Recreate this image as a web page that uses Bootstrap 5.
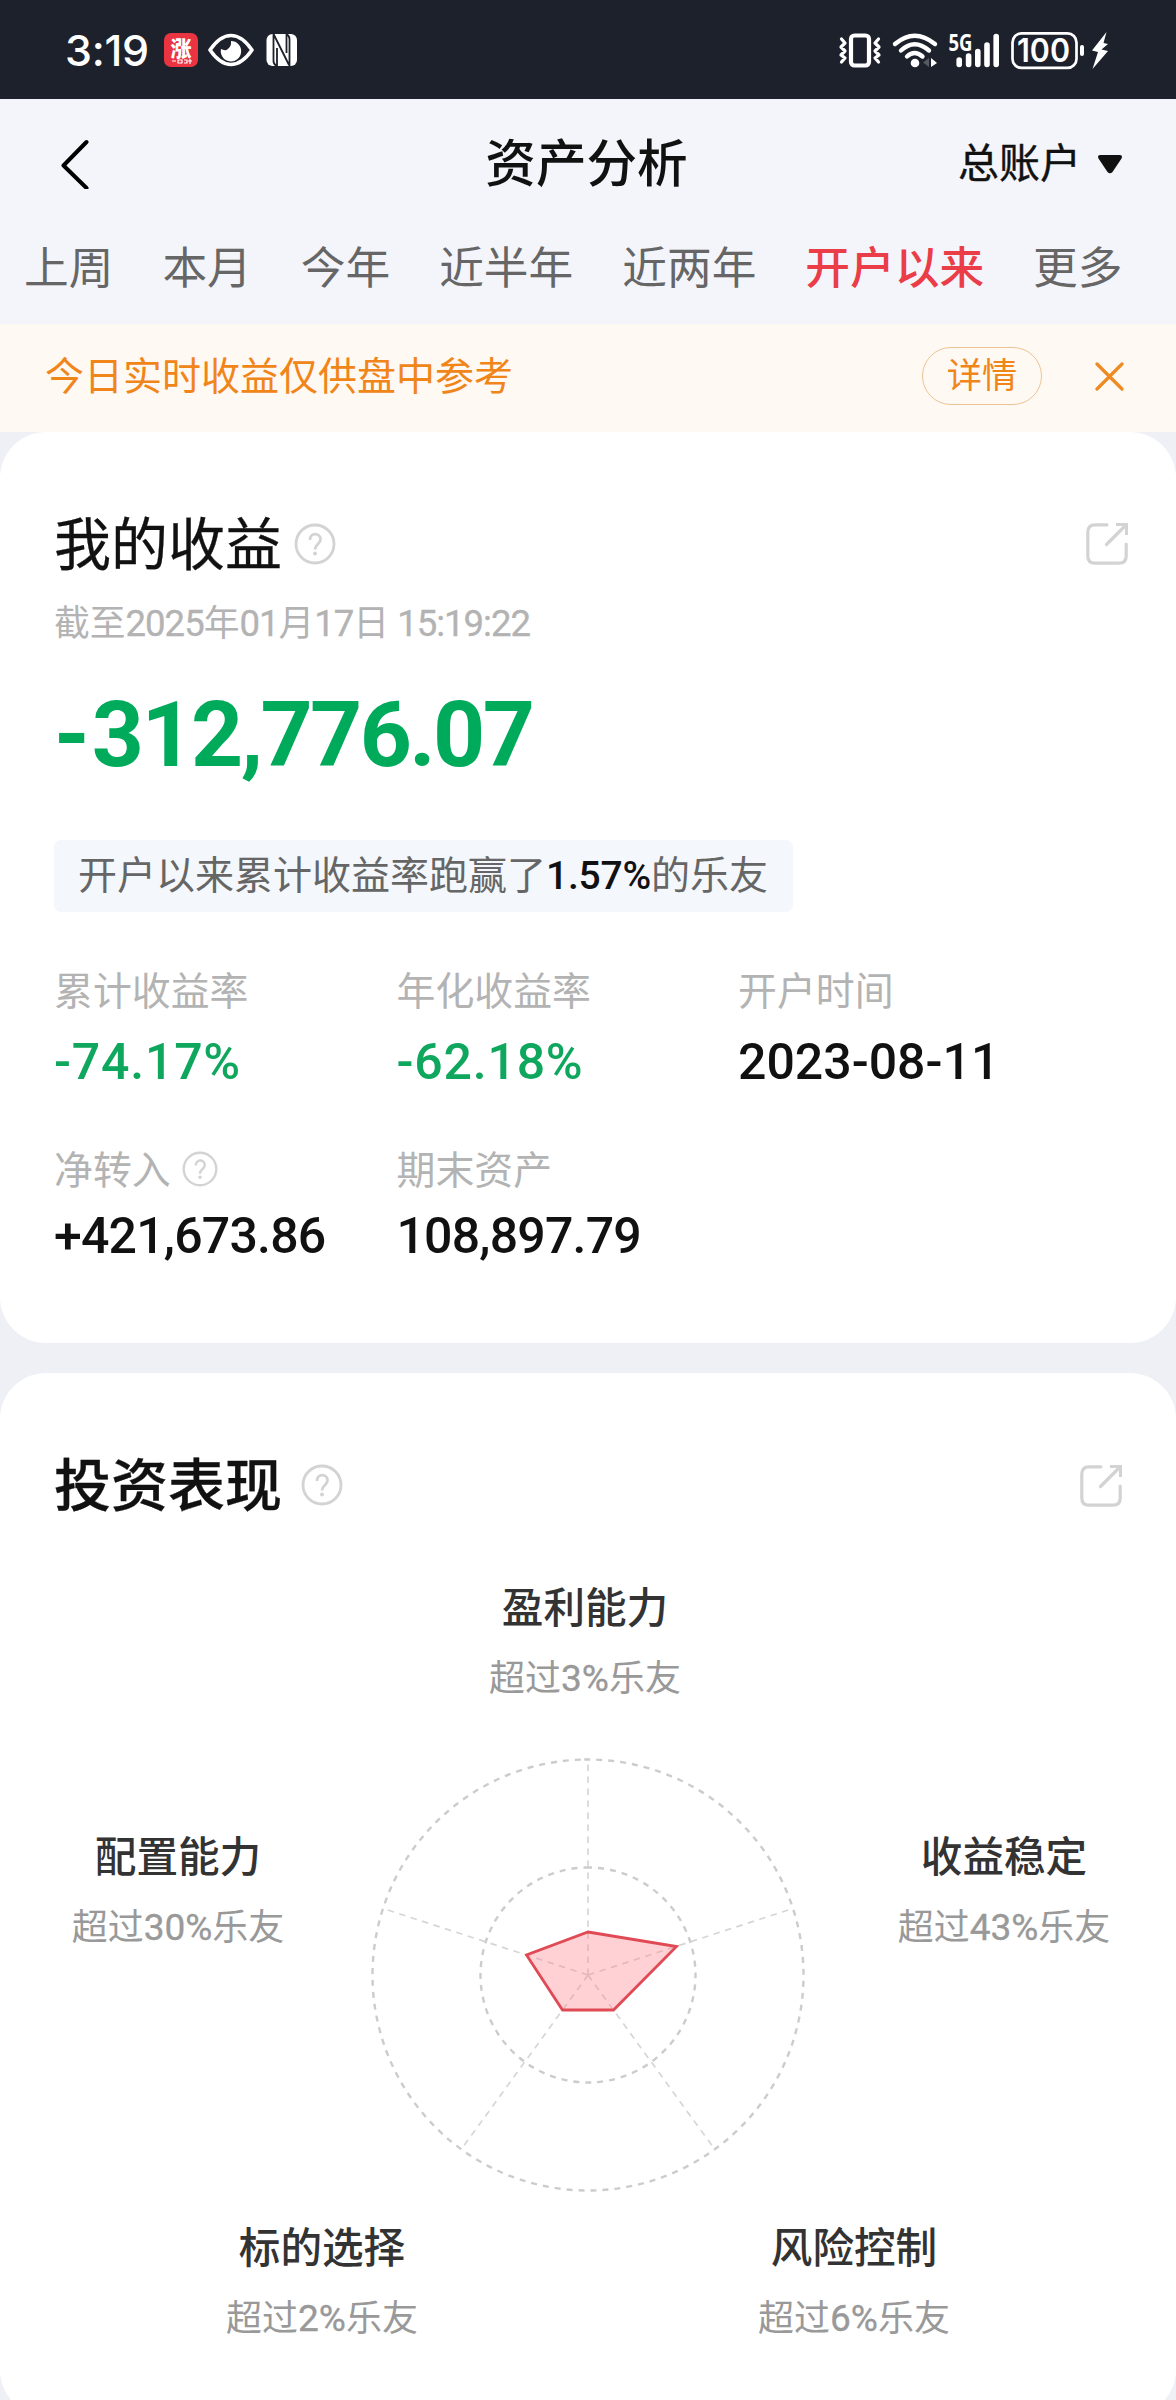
<!DOCTYPE html>
<html lang="zh-CN">
<head>
<meta charset="utf-8">
<meta name="viewport" content="width=device-width, initial-scale=1">
<title>资产分析</title>
<link href="https://cdn.jsdelivr.net/npm/bootstrap@5.3.0/dist/css/bootstrap.min.css" rel="stylesheet">
<style>
  body{font-family:"Noto Sans CJK SC",sans-serif;background:#eff0f5;color:#111;width:1176px;height:2400px;overflow:hidden}
  svg{display:block;flex:none}
  .num{font-family:Roboto,"Noto Sans CJK SC",sans-serif;font-weight:500}
  .statusbar{height:99px;background:#1d212c;padding:0 68px 0 65px}
  .clock{font:500 43px/66px Inter,sans-serif;letter-spacing:-.3px;width:99px}
  .eye{margin:0 12px 0 10px}
  .topzone{height:225px;background:#f4f5fa}
  .titlebar{height:126px;padding:0 53px 0 60px}
  .page-title{font-size:50.6px;line-height:70px;font-weight:500;margin:0 0 5px -35px}
  .acct{font-size:41px;line-height:60px;margin-bottom:4px;-webkit-text-stroke:.4px #111}
  .acct svg{margin:8px 0 0 16px}
  .period{gap:49px;padding-left:24px;font-size:44.7px;line-height:64px;color:#666;margin-top:8px}
  .period .on{color:#eb3d48;font-weight:500}
  .notice{height:108px;background:#fff9f4;color:#f08519;padding:0 52px 4px 45px;font-size:39px}
  .notice-text{margin-bottom:5px}
  .detail{width:120px;height:58px;border:1.5px solid #ecc394;border-radius:29px;font-size:35.2px;line-height:50px;margin-right:53px}
  .panel{background:#fff;border-radius:46px;padding:68px 48px 0 54px}
  .panel-a{height:911px}
  .panel-b{height:1043px;margin-top:30px;padding-right:54px}
  .panel-title{font-size:57px;line-height:80px;font-weight:400;-webkit-text-stroke:.3px #111}
  .help-a{margin-left:12px}
  .help-b{margin-left:19px}
  .help-c{margin:3px 0 0 11px}
  .share-b{margin-top:10px}
  .stamp{font-size:35.8px;line-height:50px;color:#b3b3b3;margin-top:15px;white-space:pre}
  .stamp .num,.axis-s .num{font-weight:400;-webkit-text-stroke:.35px currentColor}
  .stamp .num{font-size:36.5px;letter-spacing:-1px}
  .total{font-size:91px;line-height:100px;font-weight:700;color:#00aa5b;letter-spacing:-2.6px;margin-top:36px}
  .total .sign{letter-spacing:2px}
  .rankpill{margin-top:55px;height:72px;background:#f4f7fb;border-radius:7px;padding:0 24px;font-size:39px;line-height:64px;color:#666;width:739px}
  .rankpill .num{font-size:39px;color:#111;line-height:64px;letter-spacing:-.2px}
  .stats{display:grid;grid-template-columns:341.5px 341.5px 1fr}
  .stats-rates{margin-top:51px}
  .stats-funds{margin-top:50px}
  .stat-k{font-size:38.9px;line-height:50px;color:#b3b3b3}
  .stat-v{font-size:50px;line-height:60px;margin-top:19px}
  .stats>div+div{padding-left:1px}
  .stats-funds .stat-v{margin-top:14px;letter-spacing:-.8px}
  .down{color:#0fa65e;letter-spacing:.8px}
  .axis-t{font-size:41.6px;line-height:60px;font-weight:500;color:#333}
  .axis-s{font-size:36px;line-height:50px;color:#999;margin-top:15px}
  .axis-s .num{font-size:37px;line-height:50px}
  .radar{padding-top:54px}
  .axis-top{width:1062px}
  .axis-mid{margin-top:51px;height:440px;padding-left:4px}
  .axis-mid svg{margin-right:6px}
  .axis-side{width:240px}
  .axis-mid .axis-side{padding-top:69px}
  .axis-mid .axis-side:last-child{margin-right:-2px}
  .axis-low{margin-top:20px;padding-left:148px;gap:292px}
</style>
</head>
<body>
<svg width="0" height="0" class="position-absolute" aria-hidden="true">
  <symbol id="help" viewBox="0 0 42 42"><circle cx="21" cy="21" r="19" fill="none" stroke="#d3d3d3" stroke-width="2.8"/><path d="M16 17c0-8 10.500-7.500 10.500-.500 0 4.500-5.500 4.500-5.500 10" fill="none" stroke="#d3d3d3" stroke-width="2.800"/><circle cx="21" cy="30.500" r="2" fill="#d3d3d3"/></symbol>
  <symbol id="share" viewBox="0 0 42 42"><path d="M21 1.800H9Q1.800 1.800 1.800 9V33Q1.800 40.200 9 40.200H33Q40.200 40.200 40.200 33V21M20.500 21.500 39 3" fill="none" stroke="#d3d3d3" stroke-width="3.200" stroke-linecap="round"/><path d="M30 0H42V12H39V3H30Z" fill="#d3d3d3"/></symbol>
</svg>

<header class="statusbar d-flex align-items-center text-white">
  <span class="clock">3:19</span>
  <svg width="34" height="34" viewBox="0 0 34 34"><rect width="34" height="34" rx="7" fill="#ea3442"/><text x="17" y="23" text-anchor="middle" font-size="21" font-weight="900" font-family="Noto Sans CJK SC" fill="#fff">涨</text><path d="M8 28H12M14 27H18V30H14ZM20 27H23V30H20M26 26V31M24 28H28" stroke="#fff" stroke-width="1.200" fill="none"/></svg>
  <svg class="eye" width="46" height="34" viewBox="0 0 46 34"><path d="M2 17Q12 2.500 23 2.500T44 17Q34 31.500 23 31.500T2 17Z" fill="none" stroke="#fff" stroke-width="3.600" stroke-linejoin="round"/><path d="M23 8A9 9 0 0 1 18.500 17Q15.500 17.500 13 16A10.200 10.200 0 1 0 23 8Z" fill="#fff"/></svg>
  <svg width="32" height="34" viewBox="0 0 32 34"><rect x=".5" y="1" width="30.500" height="32" rx="6" fill="#fff"/><path d="M7.500 1V28Q7.500 31 10.500 33M7.500 1 23 32M23.500 33V6Q23.500 3 20.500 1M11 15V33M20.500 1V20" fill="none" stroke="#1d212c" stroke-width="1.800"/></svg>

  <svg class="ms-auto" width="270" height="60" viewBox="838 19 270 60">
    <rect x="851" y="34.500" width="18" height="30" rx="3.500" fill="none" stroke="#fff" stroke-width="4.200"/>
    <path d="M841.500 38 845 42 841 46 845 50 841 54 845 57 841.500 61M878.500 38 875 42 879 46 875 50 879 54 875 57 878.500 61" fill="none" stroke="#fff" stroke-width="3.200" stroke-linejoin="round" stroke-linecap="round"/>
    <g fill="none" stroke="#fff" stroke-width="4.400" stroke-linecap="round"><path d="M895 43Q914.500 26.500 935 43"/><path d="M901 49.500Q914.500 37 929 49.500"/><path d="M907 55.500Q914.500 48.500 922.500 55.500"/></g>
    <circle cx="915" cy="62" r="4.300" fill="#fff"/><path d="M929 57V66L923 61.500Z" fill="#555962"/><path d="M931 57 937 62 931 66Z" fill="#fff"/>
    <text x="948.500" y="49.500" font-family="Open Sans" font-size="22.500" font-weight="700" textLength="24" lengthAdjust="spacingAndGlyphs" fill="#fff">5G</text>
    <g stroke="#fff" stroke-width="5.600" stroke-linecap="round"><path d="M959.200 59V63.500M968.600 55V63.500M977.800 50.500V63.500M987 44V63.500M996.200 35.500V63.500"/></g>
    <rect x="1012.500" y="32.400" width="64" height="34.500" rx="9" fill="none" stroke="#fff" stroke-width="2.700"/>
    <text x="1043.500" y="61" text-anchor="middle" font-family="Inter" font-size="32" font-weight="600" textLength="53" lengthAdjust="spacingAndGlyphs" fill="#fff">100</text>
    <rect x="1080" y="44" width="4" height="11" rx="2" fill="#fff"/>
    <path d="M1106.500 31 1092 49.500 1098 51 1092.500 68 1108 50 1101.500 48.500 1108 43 1103.500 42Z" fill="#fff"/>
  </svg>
</header>

<div class="topzone">
  <nav class="titlebar d-flex align-items-center justify-content-between">
    <svg width="190" height="50" viewBox="0 0 190 50" class="mt-1"><path d="M26.500 3 3.500 26.500 26.500 49" fill="none" stroke="#000" stroke-width="4" stroke-linecap="round" stroke-linejoin="round"/></svg>
    <h1 class="page-title">资产分析</h1>
    <div class="acct d-flex align-items-center">总账户<svg width="26" height="20" viewBox="0 0 26 20"><path d="M3 1H23Q26 1.500 24.500 4.500L15.500 18Q13 20.500 10.500 18L1.500 4.500Q0 1.500 3 1Z" fill="#111"/></svg></div>
  </nav>
  <div class="period d-flex text-nowrap">
    <span>上周</span><span>本月</span><span>今年</span><span>近半年</span><span>近两年</span><span class="on">开户以来</span><span>更多</span>
  </div>
</div>

<div class="notice d-flex align-items-center">
  <span class="notice-text me-auto">今日实时收益仅供盘中参考</span>
  <span class="detail text-center">详情</span>
  <svg width="29" height="29" viewBox="0 0 29 29"><path d="M2 2 27 27M27 2 2 27" stroke="#ee8a22" stroke-width="3.200" stroke-linecap="round"/></svg>
</div>

<main>
  <section class="panel panel-a">
    <div class="d-flex align-items-center">
      <h2 class="panel-title mb-0">我的收益</h2>
      <svg class="help-a mt-2" width="42" height="42"><use href="#help"/></svg>
      <svg class="mt-2 ms-auto" width="42" height="42"><use href="#share"/></svg>
    </div>
    <div class="stamp">截至<span class="num">2025</span>年<span class="num">01</span>月<span class="num">17</span>日<span class="num"> 15:19:22</span></div>
    <div class="total num"><span class="sign">-</span>312,776.07</div>
    <div class="rankpill text-nowrap">开户以来累计收益率跑赢了<span class="num">1.57%</span>的乐友</div>
    <div class="stats stats-rates">
      <div><div class="stat-k">累计收益率</div><div class="stat-v num down">-74.17%</div></div>
      <div><div class="stat-k">年化收益率</div><div class="stat-v num down">-62.18%</div></div>
      <div><div class="stat-k">开户时间</div><div class="stat-v num">2023-08-11</div></div>
    </div>
    <div class="stats stats-funds">
      <div><div class="stat-k d-flex align-items-center">净转入<svg class="help-c" width="36" height="36"><use href="#help"/></svg></div><div class="stat-v num">+421,673.86</div></div>
      <div><div class="stat-k">期末资产</div><div class="stat-v num">108,897.79</div></div>
    </div>
  </section>

  <section class="panel panel-b">
    <div class="d-flex align-items-center">
      <h2 class="panel-title fw-medium mb-0">投资表现</h2>
      <svg class="help-b mt-2" width="42" height="42"><use href="#help"/></svg>
      <svg class="share-b ms-auto" width="42" height="42"><use href="#share"/></svg>
    </div>
    <div class="radar text-center">
      <div class="axis-top"><div class="axis-t">盈利能力</div><div class="axis-s">超过<span class="num">3%</span>乐友</div></div>
      <div class="axis-mid d-flex justify-content-between">
        <div class="axis-side"><div class="axis-t">配置能力</div><div class="axis-s">超过<span class="num">30%</span>乐友</div></div>
        <svg width="440" height="440" viewBox="-220 -220 440 440" fill="none">
          <g stroke="#ccc" stroke-width="2.400" stroke-dasharray="6 6"><circle r="215.500" transform="rotate(-91)"/><circle r="107.500" transform="rotate(-91)"/></g>
          <g stroke="#d6d6d6" stroke-width="1.700" stroke-dasharray="6.500 5.500"><path d="M0 0V-215"/><path d="M0 0 205-66.500"/><path d="M0 0 126.500 174"/><path d="M0 0-126.500 174"/><path d="M0 0-205-66.500"/></g>
          <path d="M0-43 88.500-28.500 25.500 35H-25.500L-61.500-20Z" fill="#ff8790" fill-opacity=".38" stroke="#e04a55" stroke-width="2.800"/>
        </svg>
        <div class="axis-side"><div class="axis-t">收益稳定</div><div class="axis-s">超过<span class="num">43%</span>乐友</div></div>
      </div>
      <div class="axis-low d-flex">
        <div class="axis-side"><div class="axis-t">标的选择</div><div class="axis-s">超过<span class="num">2%</span>乐友</div></div>
        <div class="axis-side"><div class="axis-t">风险控制</div><div class="axis-s">超过<span class="num">6%</span>乐友</div></div>
      </div>
    </div>
  </section>
</main>
<script src="https://cdn.jsdelivr.net/npm/bootstrap@5.3.0/dist/js/bootstrap.bundle.min.js"></script>
</body>
</html>
